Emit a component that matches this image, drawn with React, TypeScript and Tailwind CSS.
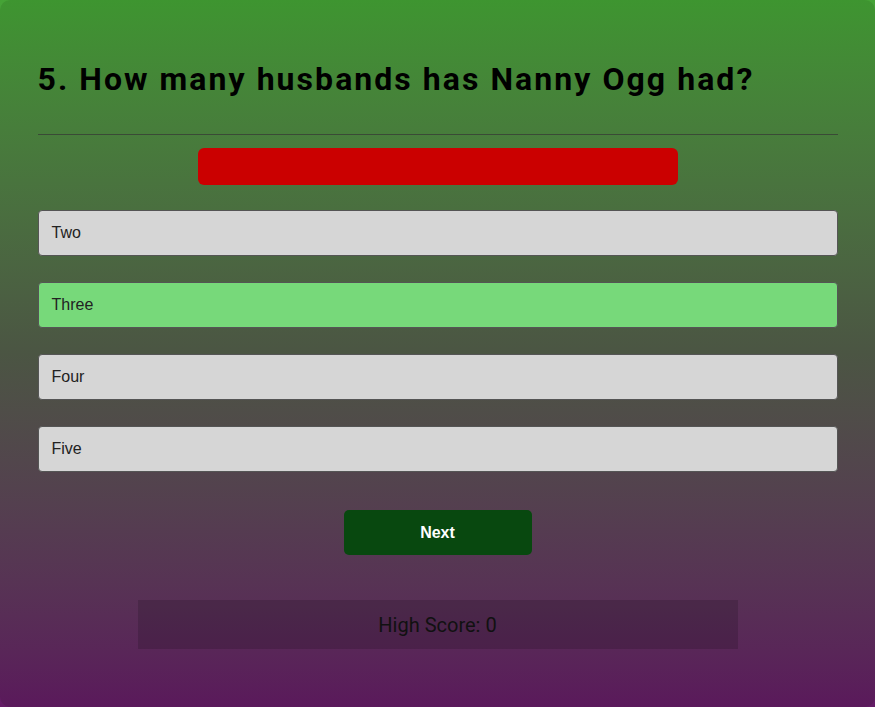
import { useState } from 'react'

const answers = ['Two', 'Three', 'Four', 'Five']

const App = () => {
  const [picked] = useState('Three')

  return (
    <div className="min-h-[707px] bg-gradient-to-b from-[#45a336] to-[#641a66] font-['Liberation_Sans',Arial,sans-serif]">
      <div className="min-h-[707px] rounded-[10px] bg-gradient-to-b from-[#3e9530] via-[#4b5543] to-[#5a195b] px-[37.5px] pt-[60px] pb-[56px]">
        <div className="mx-auto w-[800px]">
          {/* Question */}
          <h1 className="font-['Roboto',sans-serif] text-[32px] font-bold leading-[38px] tracking-[2.05px] text-black">
            5. How many husbands has Nanny Ogg had?
          </h1>

          <hr className="mt-[36px] border-t border-[#3a4a36]" />

          {/* Timer bar */}
          <div className="mx-auto mt-[13px] h-[37px] w-[480px] rounded-[6px] bg-[#cb0000]" />

          {/* Answers */}
          <div className="mt-[25px] flex flex-col gap-[26px]">
            {answers.map((a) => (
              <button
                key={a}
                className={`h-[46px] w-full rounded-[4px] border border-[#555] px-[13px] text-left text-[16px] text-[#222] ${
                  a === picked ? 'bg-[#77d97a]' : 'bg-[#d6d6d6]'
                }`}
              >
                {a}
              </button>
            ))}
          </div>

          <div className="mt-[38px] flex justify-center">
            <button className="h-[45px] w-[188px] rounded-[5px] bg-[#08480f] text-[16px] font-bold text-white">
              Next
            </button>
          </div>

          <div className="mx-auto mt-[45px] flex h-[49px] w-[600px] items-center justify-center bg-black/15 font-['Roboto',sans-serif] text-[20px] text-[#111]">
            High Score: 0
          </div>
        </div>
      </div>
    </div>
  )
}

export default App
